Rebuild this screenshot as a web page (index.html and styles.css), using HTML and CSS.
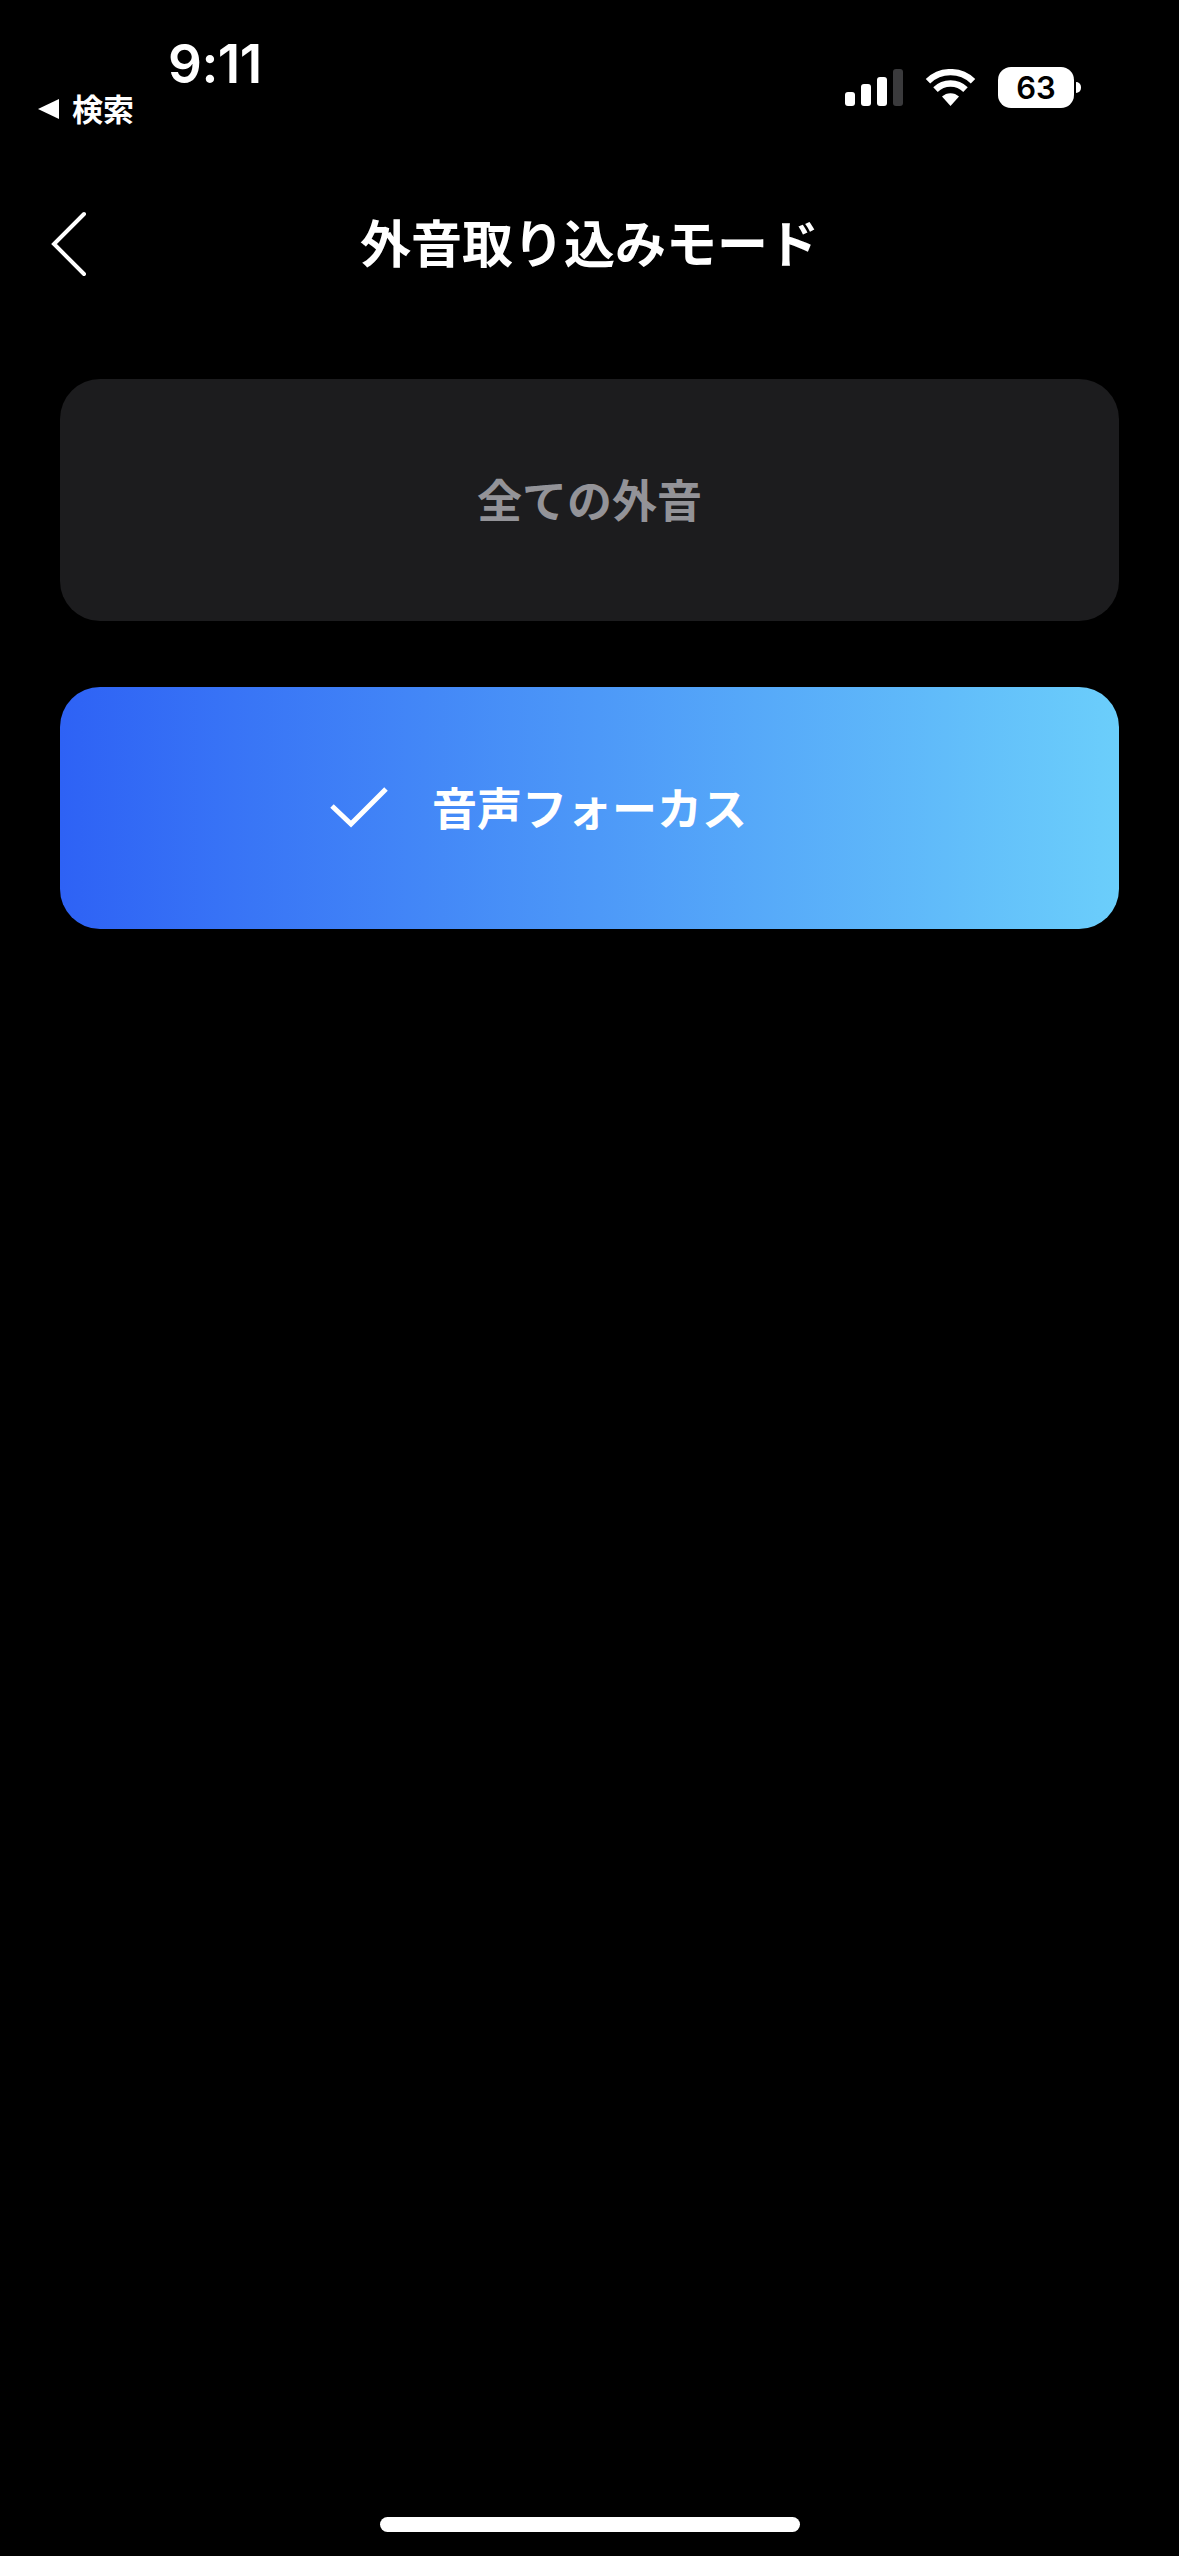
FILE: index.html
```html
<!DOCTYPE html>
<html lang="ja">
<head>
<meta charset="utf-8">
<title>外音取り込みモード</title>
<link rel="stylesheet" href="styles.css">
</head>
<body>
<div class="page">
  <div class="status">
    <div class="status-left">
      <div class="time">9:11</div>
      <div class="back-app">
        <svg class="back-tri" width="21" height="20" viewBox="0 0 21 20"><path d="M21 0V20L0 10Z" fill="#fff"/></svg>
        <span>検索</span>
      </div>
    </div>
    <div class="status-right">
      <div class="signal">
        <i class="bar b1"></i><i class="bar b2"></i><i class="bar b3"></i><i class="bar b4"></i>
      </div>
      <svg class="wifi" width="51" height="37" viewBox="0 0 51 37">
        <path d="M25.5 37L17 27.6a12.5 12.5 0 0 1 17 0Z" fill="#fff"/>
        <path d="M10.5 20.6a21.5 21.5 0 0 1 30 0" fill="none" stroke="#fff" stroke-width="6.4"/>
        <path d="M3 12.2a32.5 32.5 0 0 1 45 0" fill="none" stroke="#fff" stroke-width="6.4"/>
      </svg>
      <div class="battery"><div class="battery-body">63</div><div class="battery-nub"></div></div>
    </div>
  </div>
  <header class="nav">
    <svg class="chevron" width="36" height="66" viewBox="0 0 36 66"><path d="M33 3L3 33L33 63" fill="none" stroke="#fff" stroke-width="4" stroke-linecap="round" stroke-linejoin="miter"/></svg>
    <h1 class="title">外音取り込みモード</h1>
  </header>
  <main class="options">
    <div class="option option-off"><span class="label">全ての外音</span></div>
    <div class="option option-on">
      <svg class="check" width="58" height="41" viewBox="0 0 58 41"><path d="M2 19L21 37L56 2" fill="none" stroke="#fff" stroke-width="5"/></svg>
      <span class="label">音声フォーカス</span>
    </div>
  </main>
  <div class="home-bar"></div>
</div>
</body>
</html>
```
FILE: styles.css
```css
* { box-sizing: border-box; }
html, body { margin: 0; padding: 0; background: #000; }
body { font-family: "Noto Sans CJK JP", "Noto Sans", sans-serif; color: #fff; }
.page { position: relative; width: 1179px; height: 2556px; background: #000; overflow: hidden; }

.status { display: flex; justify-content: space-between; align-items: flex-start; height: 180px; padding: 34px 98px 0 38px; }
.status-left { display: flex; flex-direction: column; }
.time { font-family: Inter, "Liberation Sans", sans-serif; font-weight: 600; font-size: 53px; line-height: 60px; margin-left: 130px; letter-spacing: -0.5px; }
.back-app { display: flex; align-items: center; gap: 13px; height: 40px; margin-top: -6px; font-size: 31px; font-weight: 700; line-height: 40px; }
.back-tri { display: block; margin-top: 2px; }

.status-right { display: flex; align-items: flex-start; padding-top: 33px; }
.signal { display: flex; align-items: flex-end; gap: 6px; height: 37px; margin-top: 2px; }
.bar { display: block; width: 10px; border-radius: 3px; background: #fff; }
.b1 { height: 14px; }
.b2 { height: 22px; }
.b3 { height: 29px; }
.b4 { height: 37px; background: #3a3a3c; }
.wifi { display: block; margin: 2px 0 0 22px; }
.battery { display: flex; align-items: center; margin-left: 22px; }
.battery-body { width: 76px; height: 41px; border-radius: 13px; background: #fff; color: #000; font-family: Inter, "Liberation Sans", sans-serif; font-weight: 600; font-size: 31px; line-height: 41px; text-align: center; }
.battery-nub { width: 5px; height: 11px; margin-left: 2px; border-radius: 0 6px 6px 0; background: #fff; }

.nav { position: relative; display: flex; justify-content: center; align-items: center; height: 128px; padding: 0 0 6px 0; }
.chevron { position: absolute; left: 51px; top: 31px; display: block; }
.title { margin: 0; font-size: 51px; font-weight: 700; line-height: 64px; }

.options { display: flex; flex-direction: column; gap: 66px; padding: 71px 60px 0; }
.option { display: flex; justify-content: center; align-items: center; height: 242px; border-radius: 40px; font-size: 45px; font-weight: 700; line-height: 60px; }
.label { display: block; margin-top: -3px; }
.option-off { background: #1c1c1e; color: #939398; }
.option-on { gap: 44px; padding-right: 102px; background: linear-gradient(90deg, #2e62f5 0%, #6bcefb 100%); color: #fff; }
.check { display: block; margin-top: -2px; }

.home-bar { position: absolute; left: 380px; bottom: 24px; width: 420px; height: 15px; border-radius: 8px; background: #fff; }
```
